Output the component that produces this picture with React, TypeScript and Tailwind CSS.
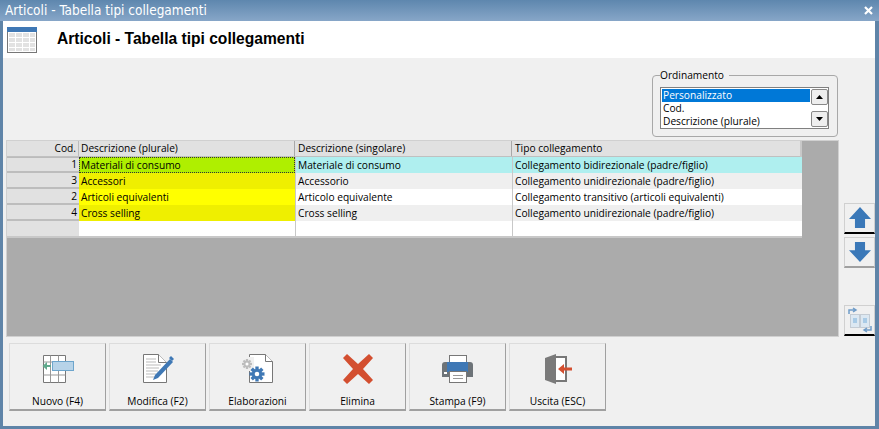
const font = { fontFamily: '"Open Sans", "Liberation Sans", sans-serif' };
const titleFont = { fontFamily: '"DejaVu Sans Condensed", "DejaVu Sans", sans-serif', fontStretch: "condensed" };

function TableIcon() {
  return (
    <svg width="30" height="26" viewBox="0 0 30 26">
      <rect x="0.5" y="0.5" width="29" height="25" fill="#fff" stroke="#777" />
      <rect x="0" y="0" width="30" height="5" fill="#3f78b5" />
      <rect x="2" y="6" width="26" height="18" fill="#e2e2e2" />
      <g stroke="#fff" strokeWidth="1">
        <path d="M8.5 6v18M15.5 6v18M22.5 6v18M2 10.5h26M2 15.5h26M2 20.5h26" />
      </g>
    </svg>
  );
}

function NuovoIcon() {
  return (
    <svg width="32" height="30" viewBox="0 0 32 30">
      <path d="M1.5 1.5h22v27h-22z" fill="#fff" stroke="#777" />
      <path d="M1.500 8h22M1.500 21h22M8.500 1.500v27M16.500 1.500v27" stroke="#999" fill="none" />
      <rect x="10.5" y="7.5" width="21" height="9" fill="#b7d3e8" stroke="#6da5cc" />
      <path d="M0.500 12l4.500-4v3h4v2h-4v3z" fill="#5fa98c" />
    </svg>
  );
}
function ModificaIcon() {
  return (
    <svg width="32" height="32" viewBox="0 0 32 32">
      <path d="M1.5 1.5h15l8 8v20h-23z" fill="#fff" stroke="#777" />
      <path d="M16.5 1.5v8h8" fill="#fff" stroke="#777" />
      <path d="M4 6h10M4 9h10M4 12h15M4 15h13M4 18h12M4 21h10M4 24h9" stroke="#bbb" />
      <path d="M28 6l3 3-15 16-5 2 2-5z" fill="#3f78b5" />
      <path d="M27 5l2-2 3 3-2 2z" fill="#3f78b5" />
    </svg>
  );
}
function Gear({ x, y, r, c }: { x: number; y: number; r: number; c: string }) {
  const teeth = [0, 45, 90, 135];
  return (
    <g transform={`translate(${x} ${y})`}>
      {teeth.map((a) => (
        <rect key={a} x={-r * 0.28} y={-r * 1.25} width={r * 0.56} height={r * 2.5} fill={c} transform={`rotate(${a})`} />
      ))}
      <circle r={r * 0.85} fill={c} />
      <circle r={r * 0.38} fill="#fff" />
    </g>
  );
}
function ElaborazioniIcon() {
  return (
    <svg width="32" height="31" viewBox="0 0 32 31">
      <path d="M7.5 1.5h16l7 7v21h-23z" fill="#fff" stroke="#777" />
      <path d="M23.5 1.5v7h7" fill="#fff" stroke="#777" />
      <rect x="0" y="4" width="12" height="14" fill="#f0f0f0" />
      <Gear x={5} y={11} r={4} c="#bdbdbd" />
      <Gear x={15} y={21} r={6} c="#3f78b5" />
    </svg>
  );
}
function EliminaIcon() {
  return (
    <svg width="30" height="30" viewBox="0 0 30 30">
      <path d="M4 0L15 10 26 0l4 4-10 11 10 11-4 4-11-10L4 30l-4-4 10-11L0 4z" fill="#d34f30" />
    </svg>
  );
}
function StampaIcon() {
  return (
    <svg width="31" height="28" viewBox="0 0 31 28">
      <rect x="7.5" y="0.5" width="17" height="9" fill="#fff" stroke="#777" />
      <path d="M3 7h25a3 3 0 0 1 3 3v12h-31v-12a3 3 0 0 1 3-3z" fill="#6d7378" />
      <rect x="5" y="7" width="21" height="10" fill="#3f78b5" />
      <rect x="2" y="17" width="3" height="2" fill="#fff" />
      <rect x="7.5" y="16.5" width="17" height="11" fill="#fff" stroke="#777" />
      <path d="M11 20.5h10M11 23.5h10" stroke="#999" />
    </svg>
  );
}
function UscitaIcon() {
  return (
    <svg width="28" height="30" viewBox="0 0 28 30">
      <path d="M10 3h12v24h-12" fill="#fff" stroke="#777" strokeWidth="2" />
      <path d="M1 4l11-4v30l-11-4z" fill="#7a7a7a" />
      <path d="M14 15l6-5v3.500h8v3h-8v3.500z" fill="#d34f30" />
    </svg>
  );
}

const rows = [
  { id: 1, a: "Materiali di consumo", b: "Materiale di consumo", c: "Collegamento bidirezionale (padre/figlio)", ac: "bg-[#afef00]", rc: "bg-[#afefef]", sel: true },
  { id: 3, a: "Accessori", b: "Accessorio", c: "Collegamento unidirezionale (padre/figlio)", ac: "bg-[#efef00]", rc: "bg-[#efefef]", sel: false },
  { id: 2, a: "Articoli equivalenti", b: "Articolo equivalente", c: "Collegamento transitivo (articoli equivalenti)", ac: "bg-[#ffff00]", rc: "bg-white", sel: false },
  { id: 4, a: "Cross selling", b: "Cross selling", c: "Collegamento unidirezionale (padre/figlio)", ac: "bg-[#efef00]", rc: "bg-[#efefef]", sel: false },
];

function Big({ label, children }: { label: string; children: React.ReactNode }) {
  return (
    <button className="w-[97px] h-[68px] flex flex-col items-center bg-[#f0f0f0] border border-[#dcdcdc] border-r-[#a0a0a0] border-b-2 border-b-[#a0a0a0] text-[10.2px] leading-[13px] text-black">
      <span className="h-[47px] flex items-center justify-center pt-[2px]">{children}</span>
      <span className="mt-[4px]">{label}</span>
    </button>
  );
}

function Side({ under, children }: { under: string; children: React.ReactNode }) {
  return (
    <div className={`w-[31px] h-[31px] flex items-center justify-center bg-[#f0f0f0] border border-[#d0d0d0] border-b-2 ${under}`}>
      {children}
    </div>
  );
}

function Cell({ className, indent, children }: { className: string; indent?: boolean; children?: React.ReactNode }) {
  return (
    <div className={`h-full pl-[2px] pt-[1px] flex items-center whitespace-nowrap overflow-hidden ${className}`}>
      <span className={indent ? "ml-[1px]" : ""}>{children}</span>
    </div>
  );
}

const cols = "grid grid-cols-[72px_216px_217px_290px]";

export default function App() {
  return (
    <div style={font} className="w-[879px] h-[429px] flex flex-col overflow-hidden bg-[#5f84a8] pl-[3px] pr-[4px] pb-[3px] text-[10.2px] text-black">
      <div style={titleFont} className="-ml-[3px] -mr-[4px] h-[21px] shrink-0 flex items-center justify-between pl-[5px] pr-[6px] bg-gradient-to-b from-[#5e87ae] to-[#87a6c8] text-white text-[13.5px]">
        <span>Articoli - Tabella tipi collegamenti</span>
        <svg width="9" height="9" viewBox="0 0 9 9"><path d="M1 1l7 7M8 1l-7 7" stroke="#fff" strokeWidth="2.200" /></svg>
      </div>
      <div className="h-[37px] shrink-0 bg-white flex items-center pl-[4px]">
        <TableIcon />
        <span style={{ fontFamily: '"Liberation Sans", Arial, sans-serif' }} className="ml-[20px] pb-[2px] text-[15.6px] font-bold leading-none">Articoli - Tabella tipi collegamenti</span>
      </div>
      <div className="flex-1 bg-[#f0f0f0] flex flex-col pl-[3px]">
        <div className="h-[82px] shrink-0 flex justify-end pr-[37px]">
          <fieldset className="mt-[11px] w-[186px] h-[68px] border border-[#a8a8a8] rounded-[4px] px-[7px] pt-[5px] pb-[6px]">
            <legend className="pr-[5px] leading-[13px]">Ordinamento</legend>
            <div className="w-[169px] h-[42px] border border-[#808080] bg-white flex">
              <div className="flex-1 leading-[13px] p-[1px]">
                <div className="bg-[#0078d7] text-white pl-[1px] h-[13px]">Personalizzato</div>
                <div className="pl-[1px] h-[13px]">Cod.</div>
                <div className="pl-[1px] h-[13px]">Descrizione (plurale)</div>
              </div>
              <div className="w-[17px] flex flex-col justify-between py-[1px]">
                <div className="h-[16px] border border-[#888] rounded-[2px] bg-[#eee] flex items-center justify-center">
                  <svg width="7" height="4"><path d="M3.500 0L7 4H0z" fill="#000" /></svg>
                </div>
                <div className="h-[16px] border border-[#888] rounded-[2px] bg-[#eee] flex items-center justify-center">
                  <svg width="7" height="4"><path d="M0 0h7L3.500 4z" fill="#000" /></svg>
                </div>
              </div>
            </div>
          </fieldset>
        </div>
        <div className="flex h-[197px] shrink-0">
          <div className="w-[833px] h-full bg-[#ababab] border border-[#d0d0d0]">
            <div className="w-[795px] bg-white border-b-2 border-r-2 border-[#c8c8c8]">
              <div className={`${cols} h-[16px] bg-[#e1e1e1] border-b border-[#c0c0c0]`}>
                <Cell className="justify-end pr-[2px] border-r border-[#bbb]">Cod.</Cell>
                <Cell className="border-r border-[#a8a8a8]">Descrizione (plurale)</Cell>
                <Cell indent className="border-r border-[#a8a8a8]">Descrizione (singolare)</Cell>
                <Cell indent className="">Tipo collegamento</Cell>
              </div>
              {rows.map((r) => (
                <div key={r.id} className={`${cols} h-[16px]`}>
                  <Cell className={`justify-end pr-[2px] bg-[#e1e1e1] border-b-2 border-[#bdbdbd] ${r.sel ? "border-t border-t-[#bbb]" : ""}`}>{r.id}</Cell>
                  <Cell className={`${r.ac} ${r.sel ? "outline-1 -outline-offset-1 outline-dotted outline-[#333]" : ""}`}>{r.a}</Cell>
                  <Cell className={`${r.rc} border-l border-[#c8c8c8]`}>{r.b}</Cell>
                  <Cell className={`${r.rc} border-l border-[#c8c8c8]`}>{r.c}</Cell>
                </div>
              ))}
              <div className={`${cols} h-[15px]`}>
                <Cell className="bg-[#e1e1e1]" />
                <Cell className="bg-white" />
                <Cell className="bg-white border-l border-[#c8c8c8]" />
                <Cell className="bg-white border-l border-[#c8c8c8]" />
              </div>
            </div>
          </div>
          <div className="ml-[5px] flex flex-col pt-[63px]">
            <Side under="border-b-black">
              <svg width="22" height="22" viewBox="0 0 24 24"><path d="M12 0l12 13h-6.500v10h-11v-10H0z" fill="#3a78b8" /></svg>
            </Side>
            <div className="mt-[3px]">
              <Side under="border-b-[#a0a0a0]">
                <svg width="22" height="22" viewBox="0 0 24 24"><path d="M12 23L0 10h6.500V1h11v9H24z" fill="#3a78b8" /></svg>
              </Side>
            </div>
            <div className="mt-[37px]">
              <Side under="border-b-black">
                <svg width="26" height="26" viewBox="0 0 26 26">
                  <rect x="3.500" y="7.500" width="9" height="13" fill="#dce8f2" stroke="#c4ccd4" />
                  <rect x="13.500" y="7.500" width="9" height="13" fill="#dce8f2" stroke="#c4ccd4" />
                  <rect x="6" y="11" width="4" height="5" fill="#a9cbe6" />
                  <rect x="16" y="11" width="4" height="5" fill="#a9cbe6" />
                  <path d="M2 7V3h6M6 1l3 2-3 2M24 19v4h-6M20 25l-3-2 3-2" fill="none" stroke="#6f9cc8" strokeWidth="1.500" />
                </svg>
              </Side>
            </div>
          </div>
        </div>
        <div className="flex gap-[3px] pl-[3px] pt-[6px]">
          <Big label="Nuovo (F4)"><NuovoIcon /></Big>
          <Big label="Modifica (F2)"><ModificaIcon /></Big>
          <Big label="Elaborazioni"><ElaborazioniIcon /></Big>
          <Big label="Elimina"><EliminaIcon /></Big>
          <Big label="Stampa (F9)"><StampaIcon /></Big>
          <Big label="Uscita (ESC)"><UscitaIcon /></Big>
        </div>
      </div>
    </div>
  );
}
